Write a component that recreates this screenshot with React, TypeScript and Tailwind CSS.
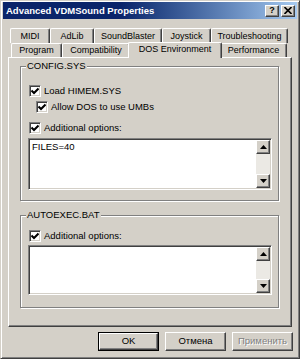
import React from "react";

const raised =
  "bg-[#d4d0c8] border border-t-white border-l-white border-r-[#404040] border-b-[#404040] shadow-[inset_-1px_-1px_0_#808080]";
const sunken =
  "border border-t-[#808080] border-l-[#808080] border-r-white border-b-white shadow-[inset_1px_1px_0_#404040,inset_-1px_-1px_0_#d4d0c8]";

function Check() {
  return (
    <span className={`w-[12px] h-[12px] bg-white ${sunken} flex items-center justify-center shrink-0`}>
      <svg width="8" height="8" viewBox="0 0 8 8">
        <path d="M0.5 3.5 L3 6 L7.5 1.5" fill="none" stroke="#000" strokeWidth="2" />
      </svg>
    </span>
  );
}

function CheckRow({ label, className = "" }: { label: string; className?: string }) {
  return (
    <div className={`flex items-center gap-[3px] h-[12px] ${className}`}>
      <Check />
      <span className="leading-[12px]">{label}</span>
    </div>
  );
}

function Arrow({ up }: { up?: boolean }) {
  return (
    <div className={`w-[14px] h-[14px] ${raised} flex items-center justify-center`}>
      <svg width="7" height="4" viewBox="0 0 7 4">
        {up ? <path d="M0 4 L3.5 0 L7 4Z" fill="#000" /> : <path d="M0 0 L7 0 L3.5 4Z" fill="#000" />}
      </svg>
    </div>
  );
}

function Memo({ text, h }: { text?: string; h: string }) {
  return (
    <div className={`${h} flex bg-white ${sunken} p-[1px]`}>
      <div className="flex-1 pl-[2px] pt-[1px] leading-[11px]">{text}</div>
      <div className="w-[14px] flex flex-col justify-between bg-[#ebe9e4]">
        <Arrow up />
        <Arrow />
      </div>
    </div>
  );
}

function Group({ title, children, className = "" }: { title: string; children: React.ReactNode; className?: string }) {
  return (
    <div
      className={`relative border border-[#808080] shadow-[1px_1px_0_#fff,inset_1px_1px_0_#fff] pl-[7px] pr-[6px] flex flex-col ${className}`}
    >
      <span className="absolute -top-[7px] left-[5px] px-[1px] bg-[#d4d0c8] leading-[12px]">{title}</span>
      {children}
    </div>
  );
}

function Tab({ label, w, selected }: { label: string; w: string; selected?: boolean }) {
  return (
    <div
      className={`${w} ${
        selected ? "h-[16px] -mb-[1px] -mx-[2px] relative z-10 pb-[3px]" : "h-full"
      } shrink-0 bg-[#d4d0c8] border-t border-l border-r border-t-white border-l-white border-r-[#404040] shadow-[inset_-1px_0_0_#808080] rounded-t-[2px] flex items-center justify-center leading-[11px] text-[9px]`}
    >
      {label}
    </div>
  );
}

export default function App() {
  return (
    <div
      className={`w-[300px] h-[359px] bg-[#d4d0c8] border border-t-[#d4d0c8] border-l-[#d4d0c8] border-r-[#404040] border-b-[#404040] shadow-[inset_1px_1px_0_#fff,inset_-1px_-1px_0_#808080] text-[9.5px] text-black font-['Liberation_Sans',Arial,sans-serif] flex flex-col`}
    >
      <div className="mx-[2px] mt-[1px] h-[17px] bg-gradient-to-r from-[#0a246a] via-[#0a246a] via-40% to-[#a6caf0] flex items-center pl-[3px] pr-[2px]">
        <span className="flex-1 text-white font-bold text-[9.5px] leading-[12px]">Advanced VDMSound Properties</span>
        <div className={`w-[14px] h-[12px] ${raised} flex items-center justify-center font-bold text-[9px] leading-none`}>?</div>
        <div className={`w-[14px] h-[12px] ml-[2px] ${raised} flex items-center justify-center`}>
          <svg width="8" height="7" viewBox="0 0 8 7">
            <path d="M0.5 0 L7.5 7 M7.5 0 L0.5 7" stroke="#000" strokeWidth="1.6" />
          </svg>
        </div>
      </div>

      <div className="ml-[9px] mt-[9px] flex flex-col">
        <div className="flex h-[15px]">
          <Tab label="MIDI" w="w-[40px]" />
          <Tab label="AdLib" w="w-[44px]" />
          <Tab label="SoundBlaster" w="w-[68px]" />
          <Tab label="Joystick" w="w-[49px]" />
          <Tab label="Troubleshooting" w="w-[77px]" />
        </div>
        <div className="flex h-[14px] items-end ml-[1px]">
          <Tab label="Program" w="w-[51px]" />
          <Tab label="Compatibility" w="w-[68px]" />
          <Tab label="DOS Environment" w="w-[94px]" selected />
          <Tab label="Performance" w="w-[67px]" />
        </div>
      </div>

      <div className="ml-[7px] w-[284px] h-[270px] border border-t-white border-l-white border-r-[#404040] border-b-[#404040] shadow-[inset_-1px_-1px_0_#808080] pl-[11px] pr-[12px] pt-[8px] flex flex-col">
        <Group title="CONFIG.SYS" className="pt-[18px] pb-[10px]">
          <CheckRow label="Load HIMEM.SYS" className="ml-[1px]" />
          <CheckRow label="Allow DOS to use UMBs" className="ml-[8px] mt-[4px]" />
          <CheckRow label="Additional options:" className="ml-[1px] mt-[9px]" />
          <div className="mt-[4px]">
            <Memo text="FILES=40" h="h-[52px]" />
          </div>
        </Group>
        <Group title="AUTOEXEC.BAT" className="mt-[14px] pt-[14px] pb-[12px]">
          <CheckRow label="Additional options:" className="ml-[1px]" />
          <div className="mt-[3px]">
            <Memo h="h-[50px]" />
          </div>
        </Group>
      </div>

      <div className="flex justify-end gap-[6px] mr-[6px] mt-[5px]">
        <div className="w-[61px] h-[19px] border border-black">
          <div className="w-full h-full border border-t-white border-l-white border-r-[#404040] border-b-[#404040] shadow-[inset_-1px_-1px_0_#808080] flex items-center justify-center">
            OK
          </div>
        </div>
        <div className={`w-[61px] h-[19px] ${raised} flex items-center justify-center`}>Отмена</div>
        <div className={`w-[61px] h-[19px] ${raised} flex items-center justify-center text-[#808080] [text-shadow:1px_1px_0_#fff]`}>
          Применить
        </div>
      </div>
    </div>
  );
}
